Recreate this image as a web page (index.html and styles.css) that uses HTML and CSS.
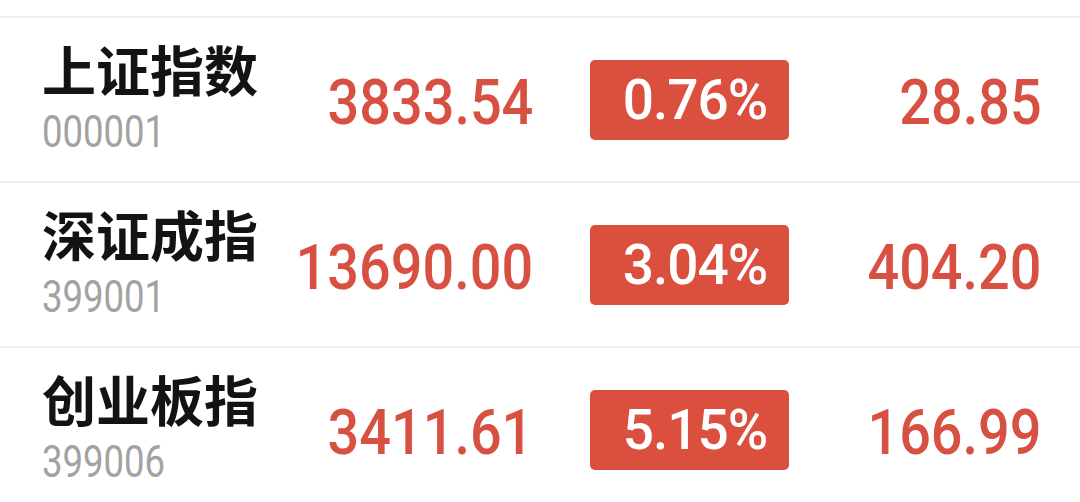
FILE: index.html
```html
<!DOCTYPE html>
<html lang="zh-CN">
<head>
  <meta charset="UTF-8">
  <meta name="viewport" content="width=device-width, initial-scale=1.0">
  <title>指数行情</title>
  <link rel="stylesheet" href="styles.css">
</head>
<body>
  <div class="index-list">
    <div class="index-row">
      <div class="index-name">
        <div class="name">上证指数</div>
        <div class="code"><span>000001</span></div>
      </div>
      <div class="price"><span>3833.54</span></div>
      <div class="percent"><span>0.76%</span></div>
      <div class="change"><span>28.85</span></div>
    </div>
    <div class="index-row">
      <div class="index-name">
        <div class="name">深证成指</div>
        <div class="code"><span>399001</span></div>
      </div>
      <div class="price"><span>13690.00</span></div>
      <div class="percent"><span>3.04%</span></div>
      <div class="change"><span>404.20</span></div>
    </div>
    <div class="index-row">
      <div class="index-name">
        <div class="name">创业板指</div>
        <div class="code"><span>399006</span></div>
      </div>
      <div class="price"><span>3411.61</span></div>
      <div class="percent"><span>5.15%</span></div>
      <div class="change"><span>166.99</span></div>
    </div>
  </div>
</body>
</html>
```

FILE: styles.css
```css
body {
  margin: 0;
  padding: 0;
  background: #ffffff;
  font-family: Roboto, "Noto Sans CJK SC", sans-serif;
  overflow: hidden;
}

.index-list {
  padding-top: 16px;
}

.index-row {
  display: grid;
  grid-template-columns: 240px 251px 256px 1fr;
  align-items: center;
  height: 163px;
  padding: 0 38px 0 42px;
  border-top: 2px solid #eeeeee;
}

.index-name {
  align-self: start;
  display: flex;
  flex-direction: column;
  padding-top: 20px;
}

.name {
  font-family: "Noto Sans CJK SC", sans-serif;
  font-size: 54px;
  font-weight: 700;
  line-height: 62px;
  color: #131313;
}

/* the digits in the app use a condensed face, so squeeze Roboto a little */
.code {
  margin-top: 10px;
  font-family: Roboto, sans-serif;
  font-size: 44px;
  line-height: 44px;
  color: #a2a2a2;
}

.code span {
  display: inline-block;
  transform: scaleX(0.83);
  transform-origin: left center;
}

.price,
.change {
  display: flex;
  justify-content: flex-end;
  font-family: Roboto, sans-serif;
  font-size: 63px;
  font-weight: 500;
  color: #d75041;
  padding-top: 6px;
  white-space: nowrap;
}

.price span,
.change span {
  display: inline-block;
  flex-shrink: 0;
  transform: scaleX(0.886);
  transform-origin: right center;
}

.percent {
  justify-self: end;
  width: 199px;
  height: 80px;
  border-radius: 5px;
  background: #db4f3f;
  color: #ffffff;
  display: flex;
  align-items: center;
  justify-content: center;
  padding-left: 11px;
  box-sizing: border-box;
}

.percent span {
  font-family: Roboto, sans-serif;
  font-size: 55px;
  font-weight: 500;
  letter-spacing: -1px;
}
```
